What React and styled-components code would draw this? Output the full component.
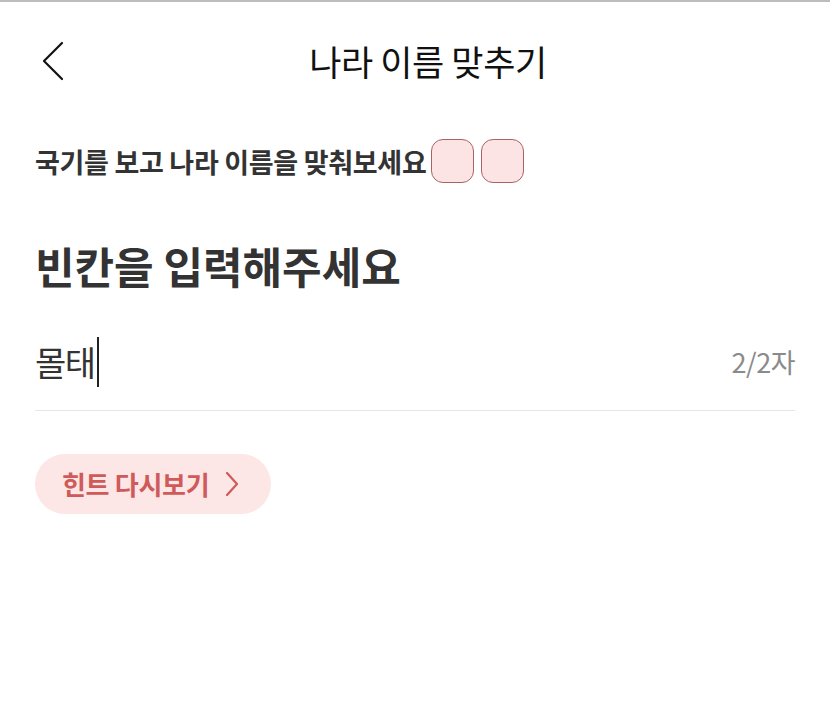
import React from "react";
import styled, { createGlobalStyle } from "styled-components";

const Global = createGlobalStyle`
  html, body { margin: 0; padding: 0; background: #fff; }
  body { font-family: "Noto Sans CJK KR", "Noto Sans", sans-serif; }
`;

const Page = styled.div`
  width: 830px;
  height: 708px;
  box-sizing: border-box;
  border-top: 2px solid #bdbdbd;
  background: #fff;
  display: flex;
  flex-direction: column;
`;

const Header = styled.header`
  height: 120px;
  display: grid;
  grid-template-columns: 120px 1fr 120px;
  align-items: center;
  margin-top: -2px;
`;

const BackButton = styled.button`
  border: 0;
  background: none;
  padding: 2px 0 0 42px;
  height: 42px;
  display: flex;
  align-items: center;
  justify-self: start;
  cursor: pointer;
`;

const Title = styled.h1`
  margin: 0;
  padding-left: 26px;
  text-align: center;
  font-size: 35px;
  font-weight: 400;
  color: #111;
  letter-spacing: -0.4px;
`;

const Body = styled.main`
  padding: 19px 35px 0 35px;
  display: flex;
  flex-direction: column;
`;

const Prompt = styled.div`
  display: flex;
  align-items: center;
  gap: 7px;
`;

const PromptText = styled.span`
  font-size: 27px;
  font-weight: 700;
  color: #333;
  letter-spacing: -0.3px;
  margin-right: -2px;
`;

const Slot = styled.span`
  width: 41px;
  height: 42px;
  border: 1.5px solid #a86464;
  border-radius: 12px;
  background: #fde4e4;
`;

const Heading = styled.h2`
  margin: 57px 0 0 0;
  font-size: 43px;
  font-weight: 700;
  color: #333;
  line-height: 1.2;
`;

const InputRow = styled.div`
  display: flex;
  align-items: center;
  justify-content: space-between;
  height: 78px;
  margin-top: 31px;
  border-bottom: 1.5px solid #e6e6e6;
  padding-bottom: 9px;
`;

const Answer = styled.span`
  display: flex;
  align-items: center;
  font-size: 34px;
  font-weight: 400;
  color: #333;
  letter-spacing: -1.5px;
`;

const Caret = styled.span`
  width: 2px;
  height: 50px;
  background: #222;
  margin-left: 2px;
`;

const Counter = styled.span`
  font-size: 27px;
  color: #8a8a8a;
  letter-spacing: -0.5px;
`;

const HintButton = styled.button`
  margin-top: 43px;
  align-self: flex-start;
  height: 60px;
  padding: 0 32px 0 27px;
  border: 0;
  border-radius: 30px;
  background: #fde6e6;
  display: flex;
  align-items: center;
  gap: 16px;
  font-family: "Noto Sans CJK KR", sans-serif;
  font-size: 26px;
  font-weight: 700;
  color: #cf5a5a;
  letter-spacing: -0.3px;
  cursor: pointer;
`;

export default function App() {
  return (
    <Page>
      <Global />
      <Header>
        <BackButton aria-label="뒤로">
          <svg width="22" height="40" viewBox="0 0 22 40" fill="none">
            <path d="M20 2 L2 20 L20 38" stroke="#111" strokeWidth="2.2" strokeLinecap="round" strokeLinejoin="round" />
          </svg>
        </BackButton>
        <Title>나라 이름 맞추기</Title>
        <div />
      </Header>
      <Body>
        <Prompt>
          <PromptText>국기를 보고 나라 이름을 맞춰보세요</PromptText>
          <Slot />
          <Slot />
        </Prompt>
        <Heading>빈칸을 입력해주세요</Heading>
        <InputRow>
          <Answer>
            몰태
            <Caret />
          </Answer>
          <Counter>2/2자</Counter>
        </InputRow>
        <HintButton>
          힌트 다시보기
          <svg width="14" height="26" viewBox="0 0 14 26" fill="none">
            <path d="M2 2 L12 13 L2 24" stroke="#cf5a5a" strokeWidth="2.2" strokeLinecap="round" strokeLinejoin="round" />
          </svg>
        </HintButton>
      </Body>
    </Page>
  );
}
